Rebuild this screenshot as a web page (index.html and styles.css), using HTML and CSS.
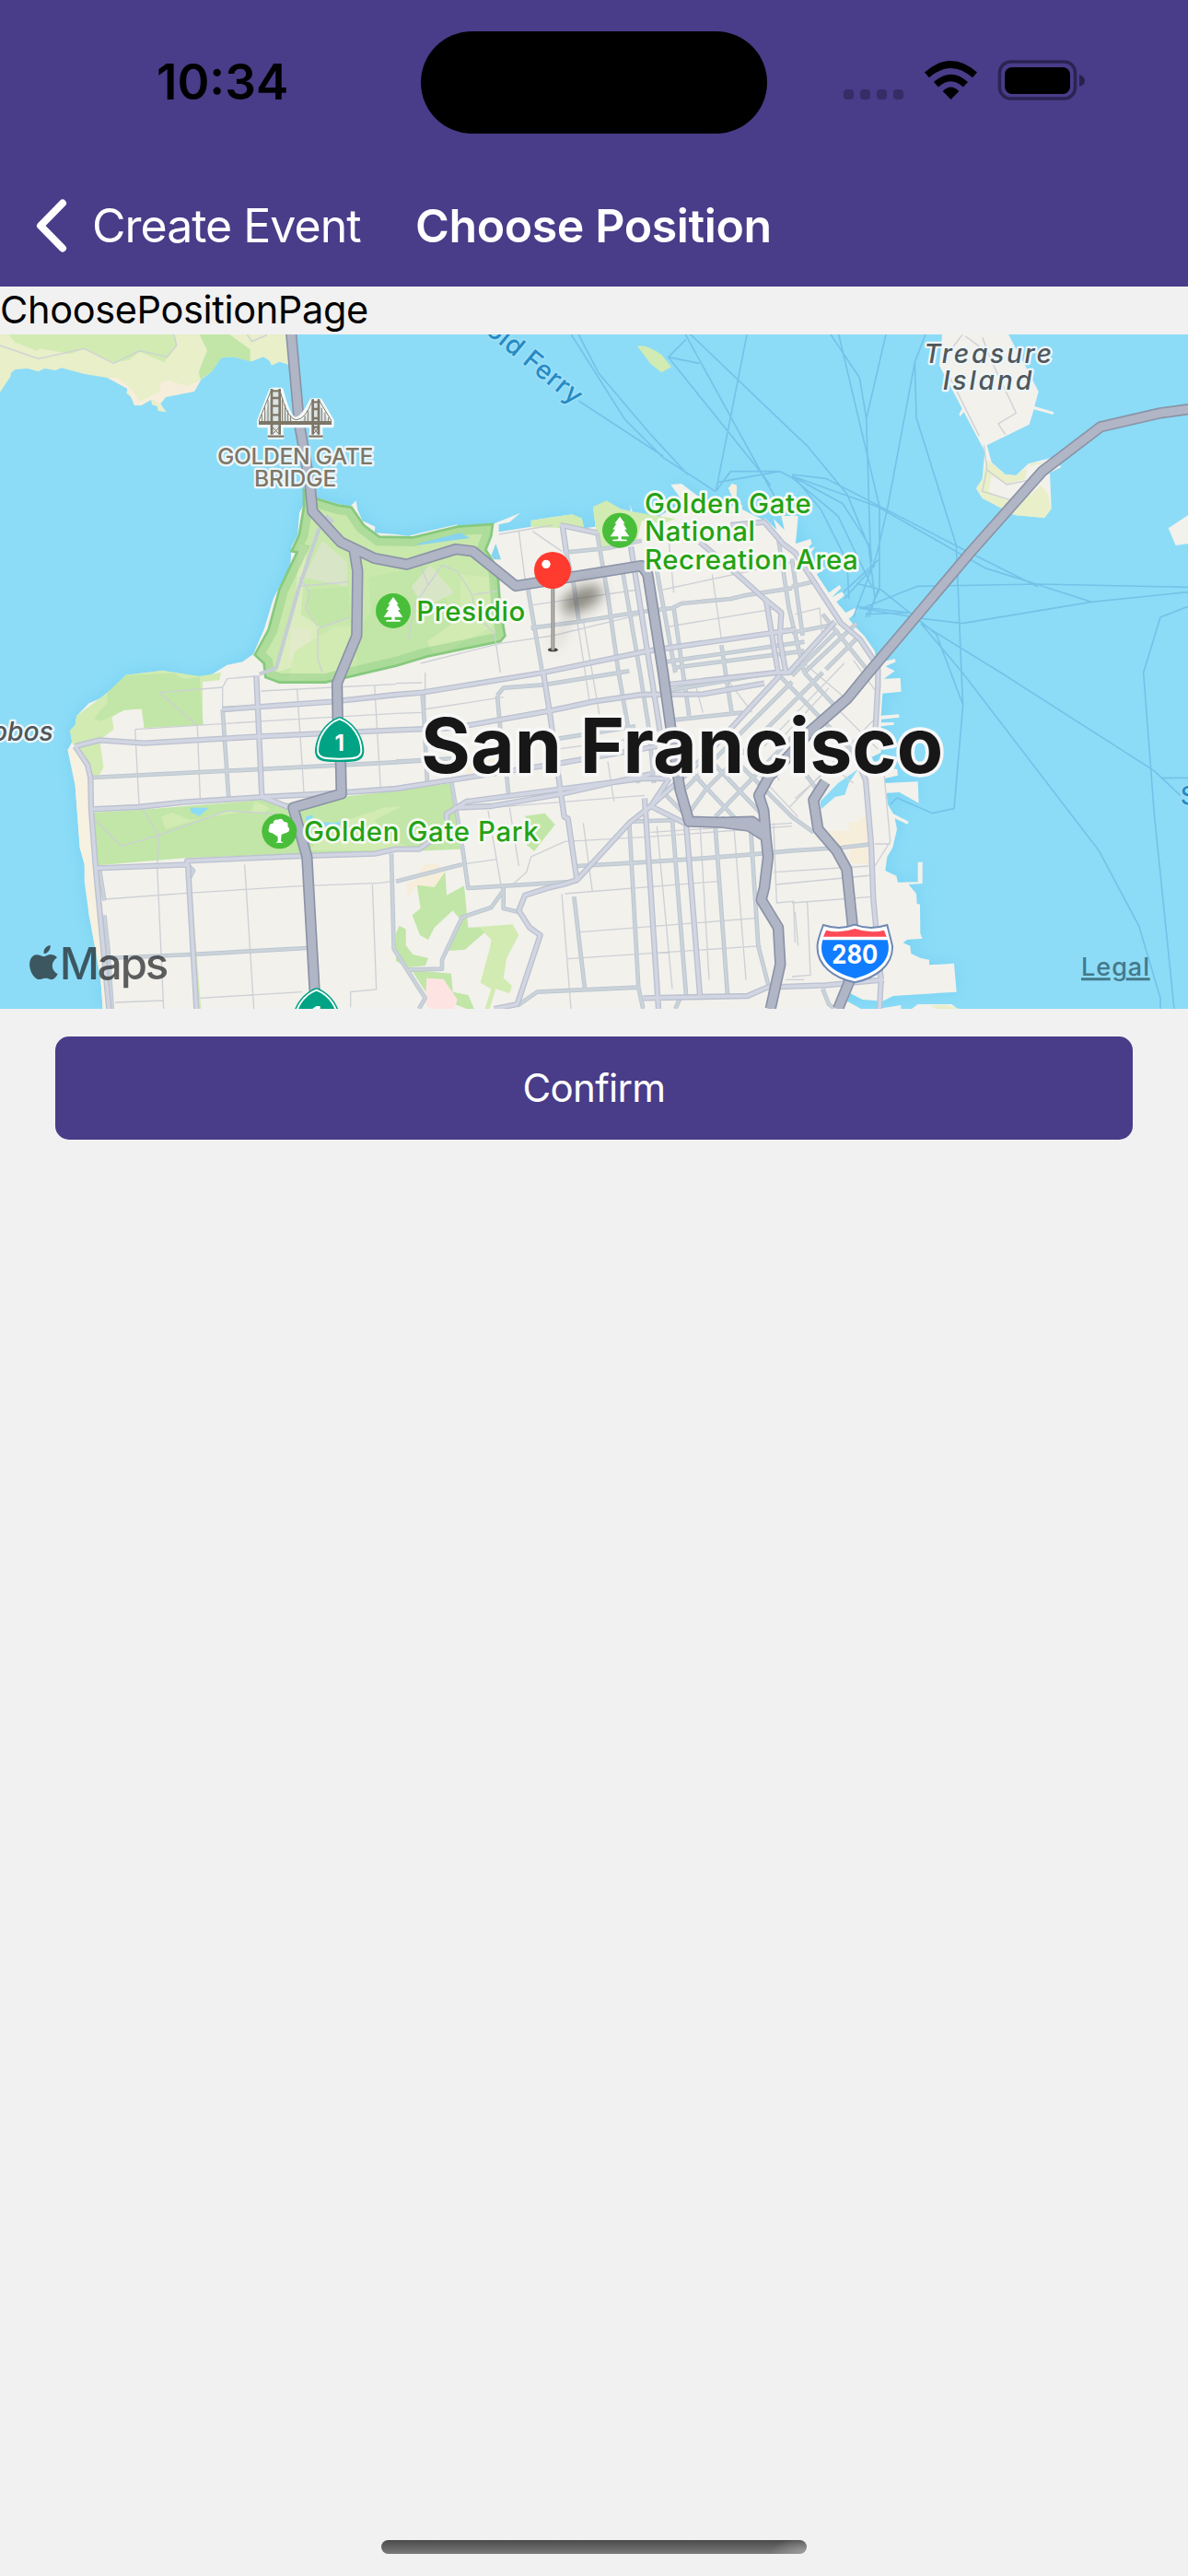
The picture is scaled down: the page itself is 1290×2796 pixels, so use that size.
FILE: index.html
```html
<!DOCTYPE html>
<html lang="en">
<head>
<meta charset="utf-8">
<title>Choose Position</title>
<link rel="stylesheet" href="styles.css">
</head>
<body>
<div class="screen">
  <header class="top">
    <div class="status">
      <span class="time">10:34</span>
      <span class="island"></span>
      <svg class="indicators" viewBox="0 0 264 44" width="264" height="44">
        <g opacity=".25"><rect x="1" y="32" width="11" height="11" rx="4"/><rect x="19" y="32" width="11" height="11" rx="4"/><rect x="37" y="32" width="11" height="11" rx="4"/><rect x="55" y="32" width="11" height="11" rx="4"/></g>
        <path d="M89 13.500Q117.500-11.500 146 13.500L141 19.300Q117.500-1.500 94 19.300ZM99 24Q117.500 7.500 136 24L130.800 29.500Q117.500 17 104 29.500ZM108.700 34Q117.500 25 126.300 34L117.500 43Z"/>
        <rect x="170.500" y="2" width="82" height="40" rx="12" fill="none" stroke="#000" stroke-width="3.500" opacity=".4"/>
        <rect x="176" y="8" width="71" height="29" rx="8"/>
        <path d="M257 16q6 2 6 6.500t-6 6.500z" opacity=".45"/>
      </svg>
    </div>
    <nav class="nav">
      <svg class="chevron" viewBox="0 0 34 58" width="34" height="58"><path d="M29 4.500L5 29L29 53.500"/></svg>
      <span class="back">Create Event</span>
      <span class="title">Choose Position</span>
    </nav>
  </header>
  <main>
    <p class="label">ChoosePositionPage</p>
    <svg class="map" viewBox="0 9 3870 2196" width="1290" height="732">
      <defs>
        <filter id="soft" x="-50%" y="-50%" width="200%" height="200%"><feGaussianBlur stdDeviation="20"/></filter>
        <filter id="shore" x="-10%" y="-10%" width="120%" height="120%"><feGaussianBlur stdDeviation="30"/></filter>
        <path id="city" d="M335 2205L328 2110 318 1990 290 1900 275 1790 275 1735 260 1680 245 1480 235 1400 222 1360 235 1335 228 1300 245 1280 250 1250 290 1210 325 1195 350 1175 385 1145 410 1118 500 1108 530 1103 565 1112 600 1131 640 1125 680 1122 700 1110 740 1085 790 1075 825 1050 860 970 890 870 910 830 945 770 950 700 970 660 975 590 990 560 990 510 1030 540 1100 560 1140 570 1160 550 1165 580 1180 615 1222 635 1220 655 1290 660 1330 665 1390 650 1490 628 1490 635 1610 625 1695 590 1660 620 1625 628 1625 652 1730 635 1730 615 1790 605 1865 595 1870 607 1895 607 1902 640 1940 635 1932 570 1945 605 1953 560 1962 600 1975 550 1988 595 2025 578 2055 585 2052 562 2065 600 2090 615 2140 605 2225 555 2185 498 2220 495 2280 540 2370 580 2395 560 2373 510 2385 495 2400 500 2398 540 2420 580 2480 610 2500 640 2490 605 2530 645 2520 610 2555 645 2545 600 2600 600 2592 690 2640 675 2645 690 2620 715 2655 700 2630 740 2690 770 2660 790 2700 850 2735 825 2740 835 2710 865 2745 845 2750 860 2725 880 2755 915 2785 900 2792 912 2765 935 2785 960 2815 990 2850 1040 2855 1080 2915 1065 2918 1075 2885 1090 2915 1105 2880 1130 2933 1128 2936 1172 2875 1178 2870 1250 2928 1246 2930 1256 2872 1262 2870 1273 2912 1272 2912 1280 2870 1285 2870 1370 2840 1385 2850 1410 2923 1425 2925 1445 2882 1455 2882 1470 2990 1465 2993 1535 2930 1500 2888 1502 2892 1540 2910 1570 2960 1595 2956 1604 2915 1585 2922 1620 2908 1680 2890 1710 2884 1755 2920 1772 2925 1793 2990 1792 2990 1727 3005 1727 3005 1797 2960 1800 2985 1830 2987 1862 2997 1865 2998 1960 3005 1976 2955 1980 2942 1990 2965 2000 2968 2025 3000 2040 3027 2045 3027 2062 3108 2057 3116 2150 2910 2163 2875 2180 2810 2175 2770 2155 2760 2180 2805 2205Z"/>
        <path id="presidio" d="M990 515L1035 545 1100 565 1145 572 1185 630 1235 668 1345 670 1490 635 1605 627 1600 665 1582 710 1620 770 1630 905 1645 990 1630 1008 1390 1058 1290 1088 1060 1142 910 1142 865 1125 860 1080 830 1052 875 970 910 840 968 718 950 715 975 660 990 570Z"/>
        <clipPath id="pres-clip"><use href="#presidio"/></clipPath>
        <g id="streets">
          <path d="M340 1900L352 2010 365 2205M325 1755L340 1852M297 1452L740 1430 1290 1402 1470 1390M725 1230L745 1520M345 2040L625 2028 1000 2007M1275 1700L1283 2010 1385 2170 1365 2205M610 1735l20 20-18 35"/>
          <path d="M1832 630L1845 720 1870 830 1885 940M1945 655L1980 860 2015 1110 2050 1310 2080 1470M1845 718L1980 705 2090 680M1720 840L1765 1100M1730 965L1880 945 2090 912 2190 900 2220 885 2380 870 2420 860 2580 835M2030 790L2085 1110 2115 1300 2130 1470M2140 780L2200 1110M2195 900L2245 1250M2350 1020L2385 1250M2535 670L2570 900 2620 1110M2170 1075L2620 1010M2190 1095L2620 1040M2580 830L2645 815M2580 980L2710 955M2580 740L2615 990"/>
          <path d="M1620 1185L1640 1160 1770 1150 2050 1105M1620 1185L1630 1295 1650 1440 1658 1520M1375 1175L1380 1230 1392 1470M1470 1460L1505 1670 1525 1812 1640 1805 1880 1790M1290 1400L1380 1395M1640 1810L1640 1878 1690 1890M1640 1820L1600 1875 1505 1907 1440 2045 1440 2075 1330 2078M1290 1790L1505 1735M1880 1740L2060 1730 2290 1715 2450 1702 2580 1690 2740 1680 2830 1670M1685 2195L1750 2150 2080 2135 2095 2205M2050 1600L2080 2140M2190 1590L2235 2160M2330 1610L2370 2160M2445 1610L2470 2000 2505 2135 2530 2140M2060 1595L2210 1590M1820 1325L2070 1285M2190 1265L2420 1240M2170 1170L2520 1110M2210 1510L2580 1140M2250 1560L2300 1490 2680 1110M2330 1580L2580 1320M2150 1490L2250 1590M2220 1400L2400 1590M2290 1370L2480 1570M2540 1120L2800 1390M2620 1110L2730 1230M2400 1400L2580 1580 2650 1630M2580 1380L2660 1490M2680 2140L2700 2190 2720 2205M2220 2160L2200 2205M1870 1840L1905 2140"/>
          <path d="M2600 1080L2710 960M2620 1110L2790 950M2690 1100L2800 990M2680 920L2840 1120M2730 970L2580 1120"/>
        </g>
        <g id="arterials">
          <path d="M245 1350L285 1410 295 1452 297 1555 312 1750 355 2205M245 1350L325 1330 470 1340 845 1318 1290 1297 1480 1290 1790 1235 1930 1205 2090 1182 2290 1180 2490 1145M297 1555L450 1548 600 1532 860 1515 1100 1502 1290 1488 1470 1460 1825 1405 2140 1350M312 1747L610 1735 610 1723 980 1707 1220 1700 1290 1685 1365 1685 1400 1660M612 1735L640 2205M725 1230L1080 1205 1290 1182 1375 1175 1770 1110 2110 1040 2590 970M835 1120L853 1515 945 1550"/>
          <path d="M1825 630L1945 655M1832 630L1845 720M2055 700L2120 1110 2150 1300M1770 1110L1790 1235 1825 1490 1838 1580 1850 1585 1880 1790M1455 1590L1455 1570 1520 1530 1825 1490 2090 1455 2180 1455M1480 1550L1600 1545 1830 1505 2120 1440M2180 1455L2120 1545 2050 1600 1880 1785 1835 1800 1790 1810 1710 1835 1690 1885 1725 1940 1760 1965 1685 2190 1610 2205M2100 1520L2145 2205M2235 1600L2280 2160M2095 2170L2435 2163 2500 2135 2580 2132 2690 2128 2880 2110M2120 1545L2290 1390 2540 1120M2120 1545L2230 1600M2170 1150L2530 1110"/>
          <path d="M2380 630L2490 620 2550 690 2590 720 2740 950 2800 1000 2860 1090 2860 1150 2852 1290M2280 685L2390 780 2490 870 2545 915 2540 1000 2560 1110M2495 870L2535 1110 2570 1110 2720 945M2780 1370L2820 1460 2838 1670 2845 1850 2870 2110 2865 2205"/>
        </g>
        <g id="freeways">
          <path d="M948 0L975 300 1010 500 1018 585 1110 685 1220 738 1325 758 1485 708 1540 715 1680 828 2090 762 2110 790 2160 1110 2185 1290 2215 1490 2245 1595 2350 1598 2440 1610 2495 1645 2502 1710 2490 1810 2480 1850 2535 1940 2542 2060 2510 2205"/>
          <path d="M1152 700L1165 780 1162 990 1098 1145 1100 1260 1110 1410 1112 1505 955 1550 1000 1710 1025 2150"/>
          <path d="M3890 250L3780 265 3585 310 3395 455 3160 720 2830 1110 2760 1195 2640 1300 2580 1370 2505 1450 2472 1510 2488 1560 2495 1645M2688 1465L2650 1525 2665 1620 2725 1690 2758 1750 2777 1930 2765 2120 2730 2205M2350 1598L2450 1595 2490 1625"/>
        </g>
        <g id="conifer"><circle r="57" fill="#49be3a"/><path d="M0-45L17-22 11-22 23-3 15-3 31 20 5 20 5 29 23 30 23 35-23 35-23 30-5 29-5 20-31 20-15-3-23-3-11-22-17-22Z" fill="#fff"/></g>
        <g id="shield"><path d="M0-88C48-72 80-20 80 26 77 56 60 60 0 60S-77 56-80 26C-80-20-48-72 0-88Z" fill="#00a384"/><path d="M0-80C43-64 71-20 71 25 69 47 50 50 0 50S-69 47-71 25C-71-20-43-64 0-80Z" fill="none" stroke="#fff" stroke-width="6"/></g>
      </defs>
      <rect class="water" y="9" width="3870" height="2196"/>
      <use href="#city" fill="#78d2f2" filter="url(#shore)"/>

      <path class="sand" d="M0 0H940L943 108 910 98 885 110 878 95 858 82 820 97 760 82 722 85 705 100 690 130 650 160 633 180 630 195 580 198 540 213 522 235 542 262 515 258 512 243 495 238 492 222 460 240 438 240 430 215 412 200 415 185 350 150 275 138 200 118 180 126 145 120 125 130 90 120 50 123 35 135 35 145 0 197Z"/>
      <path class="leaf" d="M20 0H565L575 45 535 100 455 65 420 93 370 100 275 55 230 72 130 55 120 62 50 35Z"/>
      <path class="park" d="M645 0H735L815 58V97L760 82 722 85 690 130 652 155 648 130 675 60Z"/>
      <path class="beach" d="M350 150L415 185 438 240 460 240 495 220 520 237 540 262 522 235 540 213 633 195 655 157 610 178 550 158 525 165 520 195 455 228 430 190 385 150Z"/>
      <path class="land" d="M3070 0H3280L3350 130 3360 150 3383 195 3370 243 3433 262 3430 270 3368 253 3353 302 3215 370 3230 425 3275 465 3310 468 3350 430 3420 412 3458 440 3420 460 3425 577 3403 606 3310 598 3200 542 3180 510 3200 480 3208 390 3140 262 3128 275 3124 270 3134 250 3060 110Z"/>
      <path class="sand" d="M3213 415L3275 465 3310 468 3365 427 3405 425 3345 440 3340 480 3280 495 3230 470 3220 520 3290 550 3360 530 3390 500 3415 530 3423 577 3403 606 3303 597 3200 542 3180 510 3200 480Z"/>
      <path class="land" d="M3870 597L3806 640 3830 696 3870 690ZM2970 2205L2990 2190H3100L3120 2205ZM2860 2205L2935 2193V2205Z"/><path class="sand" d="M3030 2195L3080 2192 3125 2205H3050Z"/>
      <path class="leaf" d="M2076 47Q2105 40 2155 75L2187 115 2155 133 2120 105Z"/>
      <use href="#city" class="land"/>
      <path d="M2795 1425L2765 1470 2752 1508 2720 1515 2675 1555 2672 1530 2730 1470Z" fill="#8cdcf7"/>
      <path d="M220 1360L245 1355 285 1410 312 1750 340 1960 355 2205H335L328 2110 290 1900 275 1735 260 1680 245 1480Z" fill="#f6f1e0"/>
      <path class="leaf" d="M235 1340L228 1300 245 1280 250 1250 325 1195 350 1175 410 1118 530 1103 650 1122 720 1110 715 1135 660 1140V1280L470 1290 460 1228 400 1232 365 1255 370 1295 325 1330 337 1420 320 1450 297 1450 285 1410 245 1350Z"/>
      <path class="park" d="M410 1118L565 1112 600 1131 650 1125 662 1280 470 1290 463 1228 405 1232 330 1268 305 1260 350 1210 350 1175Z"/>
      <path class="park" d="M305 1565L450 1558 850 1525 940 1535 1110 1515 1290 1495 1470 1470 1500 1685 1390 1690 980 1700 610 1713 318 1738Z"/>
      <path class="leaf" d="M525 1580L560 1565 620 1590 820 1560 830 1530 860 1540 880 1555 850 1570 740 1560 540 1620ZM1000 1690L1130 1590 1250 1550 1310 1545 1220 1590 1270 1660 1350 1680 1220 1690Z"/>
      <path d="M620 1550L680 1550 650 1577 622 1565ZM995 1580L1018 1573 1020 1592 1080 1600 1110 1596 1100 1620 1000 1600Z" fill="#8cdcf7"/>
      <path class="park" d="M1710 1577L1775 1568 1808 1605 1740 1692 1715 1670 1740 1650ZM1358 1800L1415 1808 1450 1758 1455 1835 1512 1804 1525 1940 1600 1938 1515 2012 1462 2016 1500 1915 1475 1885 1415 1940 1395 1980 1368 1965 1343 1900 1370 1878ZM1300 1935L1322 1945V1998L1345 2028 1395 2040 1385 2065 1330 2070 1290 2050V1960ZM1340 2078L1470 2090 1475 2150 1525 2160 1545 2205H1520L1390 2155Z"/>
      <path class="leaf" d="M1560 1938L1670 1930 1690 1965 1650 2040 1640 2105 1668 2130 1660 2155 1615 2140 1595 2205H1580L1600 2140 1565 2120 1595 2010 1600 1980ZM625 1830L655 2205H630Z"/>
      <path class="beach" d="M1325 1795L1355 1785 1380 1735 1420 1730 1450 1758 1415 1808 1358 1802 1325 1850ZM2685 1625L2765 1625V1598L2795 1595 2820 1570 2828 1675 2730 1678ZM2770 1680H2825L2832 1735 2768 1730ZM1500 1430L1560 1390 1650 1390 1550 1445ZM2373 510L2385 495 2400 500 2398 540 2420 570 2395 590 2400 555Z"/>
      <path d="M1390 2105L1445 2108 1490 2175 1480 2205H1400L1385 2185Z" fill="#fde4e2"/>
      <path class="leaf" d="M1730 637V615L1865 595 1895 607 1905 650 1860 640ZM1940 635L1932 570 1953 560 1975 550 2025 578 2055 585 2200 610 2160 625 2090 615 2075 680 1960 705Z"/>
      <use href="#presidio" fill="#c9e8ac"/>
      <g clip-path="url(#pres-clip)">
        <path class="park" d="M1000 840L1135 830 1140 930 1040 960 1000 900ZM1200 800L1400 760 1540 1050 1290 1090 1170 1120 1150 990 1210 910Z"/>
        <path d="M1050 680L1130 750 1130 830 990 800ZM950 960L1010 970 1020 1030 940 1070ZM1400 760L1480 850 1380 900 1340 830Z" fill="#d8e5c7"/>
        <path class="sand" d="M975 690L1000 700 980 920 1040 960 1020 1070 900 1110 960 900Z" opacity=".6"/>
        <path class="leaf" d="M1500 790L1600 800 1640 940 1420 1060 1390 1010 1500 930ZM1090 960L1150 960 1140 1110 940 1140 960 1040Z"/>
      </g>
      <use href="#presidio" clip-path="url(#pres-clip)" fill="none" stroke="#9dd48d" stroke-opacity=".6" stroke-width="58"/>
      <use href="#presidio" fill="none" stroke="#86c97e" stroke-width="8"/>
      <path d="M1362 690L1500 655 1530 672 1360 695ZM1600 730L1615 690 1632 742 1610 742Z" fill="#86d4ef"/>

      <g class="ferry">
        <path d="M1855 0L2035 285 2160 410 2230 455 2330 520M1880 0L1950 135 2120 335 2240 465M1885 225L2160 405M2228 0L2475 450 2525 540M2240 0L2590 335 2628 370 2760 530 2830 700 2850 870M2435 0L2332 520 2380 455 2540 455 2590 480M2235 25L2177 83 2480 460 2510 500M2177 83L2278 103M2340 490L2540 455M2580 465L2690 478 3130 705 3380 830M2580 470L2860 570 3210 770 3385 825 3555 880 3870 848M2700 0L2800 150 2822 280 2835 700 2840 750M2730 0L2865 570V840L2820 930M2888 0L2823 280M3018 0L2980 100 2985 280 3115 695 3132 1110 3137 1215 3108 1553 3037 1568 2922 1518 2900 1540M2980 100L2890 580 2855 730 2780 930M2580 470L2745 560 2835 700M2580 475L2730 600 2840 830M2585 470L2675 580 2760 750 2765 870M2985 830L2810 900M2985 829L3380 822 3870 832M2800 900L3010 935 3135 950 3555 880M2790 820L2870 840 3050 985 3137 1215M3000 950L3260 1110 3760 1430 3845 1510M3000 950L3135 1110 3580 1690 3710 1935 3780 2170V2205M3870 895L3780 930 3725 1110 3760 1570 3825 2205M3780 1453H3870M2745 850L2865 740M2750 870L2850 760M2820 920L2960 915 2790 895M2860 840L2830 930"/>
      </g>
      <g class="lane">
        <path d="M0 45L125 88 275 55 370 103 455 62 545 82 575 45 565 0M805 9L820 32 870 10M520 1175L725 1158 740 1130 830 1122M520 1175L640 1280M440 1295L640 1282 960 1262 1290 1243 1375 1240M440 1295L453 1540M643 1285L652 1520M968 1165L990 1500M1220 1150L1240 1490M850 1170L1290 1148M310 1590L395 1675 517 1640 740 1560 900 1570M465 1555L517 1640 512 1740 533 2205M797 1735L827 2205M340 1848L610 1828 980 1805 1240 1795 1275 1790M650 2170L985 2150M375 2184L530 2178M1213 1800L1226 2142 1142 2150V2200M725 1160V1230M1380 1230L1640 1190M1290 1145L1375 1143"/>
        <path d="M1035 960L995 900 1010 850 975 800M980 828L1135 815M1040 965L1140 930M1035 965V1065L1050 1110M1330 1000L1350 890 1395 825 1370 760M1395 825L1440 760 1490 780 1540 860 1545 920 1610 980 1630 1110M1545 855L1620 845M1370 1080L1630 1015 1800 990 2090 920M1735 650L1830 715M1690 650L1715 840M1880 940L1920 1200M1900 940L1960 1290M2160 840L2580 750M2180 960L2540 900M2320 790L2350 1000M2175 640L2195 850M1735 890L2080 840M1625 660L1800 630M1385 1225V1110"/>
        <path d="M1590 1560L1635 1820M1660 1550L1690 1740M1500 1735L1620 1718M1670 1800L1715 1760 1730 1710 1840 1660 2110 1645 2580 1610M1830 1830L1860 2205M1840 1830L2340 1790M1890 1955L2460 1910M1850 2042L2480 2000M1900 1600L1930 1825M1600 1550L2100 1510M2120 1630L2580 1600M2280 1600L2310 2110M2140 1610L2190 2140M2390 1600L2430 2110M2520 1760L2830 1740M2530 1800L2840 1770M2580 1860L2840 1840M2580 2100L2640 2095 2630 1855M2520 1600L2530 1860 2585 1855 2590 1990M2880 1440L2900 1660 2850 1740M2850 1668H2900M1980 1400L2000 1530M1810 1360L2100 1320M2260 1130L2290 1240M2360 1120L2450 1240M2430 1340L2540 1460M2490 1350L2750 1080M2460 1430L2600 1580M2550 1320L2700 1160M2650 1150L2860 1360M2570 1550L2850 1260M2590 1520L2840 1300M2780 1470L2690 1400M2590 920L2670 900 2680 1000M2590 1890L2600 2000M2560 2110H2620M2620 1080L2750 1190M2780 1070L2860 1180"/>
      </g>
      <use href="#streets" class="line" stroke="#bdc6d0" stroke-width="14"/><use href="#streets" class="line" stroke="#cbd3da" stroke-width="8"/>
      <path d="M1040 640L975 830 900 1095 845 1115M1060 600L1085 620" class="line" stroke="#c5cdd5" stroke-width="12"/>
      <use href="#arterials" class="line" stroke="#bbc1cf" stroke-width="19"/><use href="#arterials" class="line" stroke="#d2d5e2" stroke-width="11"/>
      <path class="lane" d="M3200 18L3225 85 3310 265 3252 300 3275 335M3090 140L3190 340M3205 370L3215 445 3200 520 3300 550M3215 450L3280 498 3345 485M3135 10L3100 55M3145 15L3200 55"/>
      <use href="#freeways" class="line" stroke="#8b93a7" stroke-width="37"/><use href="#freeways" class="line" stroke="#b0b6c5" stroke-width="27"/>

      <g class="bridge">
        <path d="M845 290L885 190H915Q940 285 965 287 990 280 1016 225H1042L1080 290V305H1043V340H1016V305H915V340H880V305H845Z" fill="#dce4e5" stroke="#f4fafb" stroke-width="16" stroke-linejoin="round"/>
        <path d="M872 342H925M1006 342H1052" stroke="#f4fafb" stroke-width="16"/>
        <path d="M885 186V335M911 186V335M1019 220V335M1038 220V335" stroke-width="8"/>
        <path d="M885 193H911M885 216H911M885 242H911M885 271H911M1019 229H1038M1019 252H1038M1019 282H1038M1019 311H1038M872 341H925M1006 341H1052" stroke-width="7"/>
        <path d="M843 297H1080" stroke-width="12"/>
        <path d="M843 291L885 187M911 187Q935 285 965 287 995 287 1019 221M1038 221L1080 291M853 295V270M863 295V245M873 295V221M920 295V214M929 295V238M938 295V257M947 295V272M993 295V274M1003 295V257M1048 295V248M1059 295V262M1070 295V279M888 312L909 333M909 312L888 333M1021 313L1037 333M1037 313L1021 333" stroke-width="3"/>
      </g>
      <g class="caps" font-size="74"><text x="708" y="431" textLength="508">GOLDEN GATE</text><text x="828" y="504" textLength="268">BRIDGE</text></g>

      <use href="#conifer" x="1281" y="909"/><use href="#conifer" x="2019" y="647"/>
      <circle cx="910" cy="1627" r="57" fill="#49be3a"/>
      <path d="M905 1645L887 1633Q869 1632 877 1614 877 1600 890 1601 891 1587 906 1589 918 1581 925 1596 942 1596 937 1610 950 1624 934 1631L917 1637 915 1659 924 1664H898L905 1659Z" fill="#fff"/>
      <g class="place" font-size="88">
        <text x="2100" y="592" textLength="542">Golden Gate</text><text x="2100" y="682" textLength="360">National</text><text x="2100" y="773" textLength="695">Recreation Area</text>
        <text x="1357" y="941" textLength="354">Presidio</text><text x="990" y="1658" textLength="764">Golden Gate Park</text>
      </g>
      <g class="isle" font-size="85"><text x="3010" y="101" textLength="416">Treasure</text><text x="3071" y="189" textLength="290">Island</text><text x="-75" y="1332" textLength="248">Lobos</text></g>
      <text class="ferry-name" transform="translate(1588 7) rotate(39.500)" font-size="85" x="-10" y="2" textLength="376">old Ferry</text>
      <text class="ferry-name" font-size="80" x="3845" y="1540">S</text>

      <use href="#shield" x="1106" y="1341"/><use href="#shield" x="1031" y="2224"/>
      <text class="route" x="1106" y="1365" font-size="73">1</text><text class="route" x="1031" y="2250" font-size="73">1</text>
      <path d="M2682 1932Q2735 1950 2784 1931 2835 1950 2890 1932 2897 1960 2907 2000C2910 2065 2850 2105 2785 2119 2720 2105 2657 2065 2663 1995Q2667 1970 2682 1932Z" fill="#fff" stroke="#7088b2" stroke-width="6"/>
      <path d="M2691 1949Q2735 1961 2785 1944 2835 1961 2880 1949L2888 1970H2682Z" fill="#ff4b56"/><path d="M2680 1981H2891C2908 2040 2865 2086 2785 2106 2705 2086 2662 2040 2680 1981Z" fill="#107cff"/>
      <text class="route" x="2785" y="2058" font-size="86" textLength="150" lengthAdjust="spacingAndGlyphs">280</text>

      <text class="city-name" x="1371" y="1436" font-size="247" textLength="1702">San Francisco</text>
      <ellipse cx="1895" cy="870" rx="72" ry="36" transform="rotate(-25 1895 870)" fill="#57554b" opacity=".65" filter="url(#soft)"/>
      <path d="M1805 1030L1870 900" stroke="#6b6963" stroke-width="18" opacity=".25" filter="url(#soft)"/>
      <ellipse cx="1801" cy="1036" rx="16" ry="6" fill="#3f403e"/><path d="M1801 820V1037" stroke="#8c8b88" stroke-width="12"/><path d="M1801 820V1037" stroke="#b9b7b2" stroke-width="5"/>
      <circle cx="1800" cy="777" r="60" fill="#ff3a2f"/><circle cx="1779" cy="757" r="14" fill="#fff"/>

      <g class="brand"><path d="M164 1998C166 2014 151 2027 143 2025 140 2010 152 2000 164 1998ZM142 2035C151 2034 158 2027 167 2028 177 2029 183 2033 186 2038 164 2053 166 2081 188 2092 181 2105 174 2111 164 2109 152 2104 145 2104 135 2108 122 2113 112 2103 104 2090 93 2070 93 2042 109 2032 120 2024 133 2033 142 2035Z"/><text x="194" y="2108" font-size="142" textLength="356">Maps</text></g>
      <text class="legal" x="3522" y="2096" font-size="81" textLength="222">Legal</text>
      <path d="M3522 2108H3617M3668 2108H3746" stroke="#45788a" stroke-width="9"/>
    </svg>
    <button class="confirm">Confirm</button>
  </main>
  <footer class="bottom"><span class="home"></span></footer>
</div>
</body>
</html>
```
FILE: styles.css
```css
* { box-sizing: border-box; }
body { margin: 0; background: #f1f1f1; font-family: Inter, "Liberation Sans", sans-serif; color: #000; }
.screen { width: 1290px; height: 2796px; display: flex; flex-direction: column; }
.top { height: 311px; background: #493c89; }
.status { height: 178px; display: grid; grid-template-columns: 457px 376px 1fr; align-items: center; }
.time { font-size: 53px; font-weight: 600; line-height: 60px; letter-spacing: 0; padding-left: 170px; }
.island { height: 111px; border-radius: 56px; background: #000; }
.indicators { margin: 0 0 4px 82px; }
.nav { height: 133px; padding-left: 39px; display: flex; align-items: center; color: #fff; font-size: 50px; line-height: 60px; white-space: nowrap; }
.chevron { flex: none; fill: none; stroke: #fff; stroke-width: 8; stroke-linecap: round; stroke-linejoin: round; }
.back { width: 354px; padding-left: 27px; letter-spacing: -1px; }
.title { padding-left: 24px; font-weight: 600; letter-spacing: -.4px; }
main { flex: 1; display: flex; flex-direction: column; }
.label { margin: 0; height: 52px; line-height: 51px; font-size: 41.500px; letter-spacing: -.36px; }
.map { display: block; flex: none; }
.confirm { margin: 30px 60px 0; height: 112px; border: 0; border-radius: 15px; background: #493c89; color: #fff; font: 400 42px/112px Inter, "Liberation Sans", sans-serif; letter-spacing: -.7px; padding: 0; }
.bottom { height: 39px; display: flex; justify-content: center; align-items: flex-start; }
.home { width: 462px; height: 15px; border-radius: 8px; background: radial-gradient(ellipse 40px 18px at 100% 100%, #a0a0a0, transparent), linear-gradient(#4b4b4b, #7a7a7a); }

.water { fill: #8cdcf7; }
.land { fill: #f2f1ec; }
.sand { fill: #e8efc9; }
.leaf { fill: #d1ebb2; }
.park { fill: #c1e6a7; }
.beach { fill: #f6eedb; }
.ferry { fill: none; stroke: #75c2e9; stroke-width: 5; }
.lane { fill: none; stroke: #cdd0d5; stroke-width: 4; }
.line { fill: none; stroke-linejoin: round; }
.bridge { fill: none; stroke: #7d7768; }
.map text { font-family: Inter, "Liberation Sans", sans-serif; font-weight: 550; paint-order: stroke; stroke-linejoin: round; }
.caps { fill: #7d7768; stroke: #eef6f8; stroke-width: 14; }
.place { fill: #24a214; stroke: #f6faf3; stroke-width: 16; }
.isle { fill: #50575b; stroke: #edf6f9; stroke-width: 14; font-style: italic; }
.map .ferry-name { fill: #258bc5; stroke: #a5e1f8; stroke-width: 8; }
.map .route { fill: #fff; text-anchor: middle; font-weight: 700; }
.map .city-name { fill: #171717; stroke: #f7f7f7; stroke-width: 22; font-weight: 680; }
.brand { fill: #1c2022; opacity: .7; }
.map .brand text { font-weight: 500; }
.map .legal { fill: #45788a; font-weight: 500; }
```
